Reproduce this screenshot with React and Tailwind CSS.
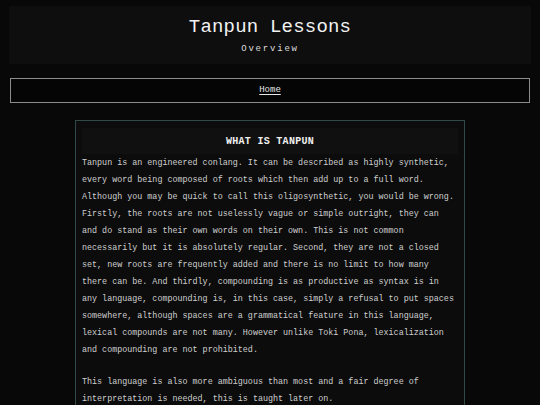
export default function App() {
  const mono = { fontFamily: '"Liberation Mono", "DejaVu Sans Mono", monospace' }
  return (
    <div className="min-h-screen bg-[#080808] px-[9px] pt-[6px] text-[#d4d4d4]" style={mono}>
      <header className="flex h-[58px] flex-col items-center bg-[#0e0e0e] pt-[10px]">
        <h1 className="text-[19px] leading-[22px] font-normal tracking-[0.2px] text-[#f2f2f2]">Tanpun Lessons</h1>
        <p className="mt-[5px] text-[9px] leading-[12px] tracking-[1.8px] text-[#dcdcdc]">Overview</p>
      </header>

      <nav className="mx-[1px] mt-[14px] flex h-[25px] items-center justify-center border border-[#8c8c8c] bg-[#050505]">
        <a className="text-[9px] text-[#e6e6e6] underline underline-offset-2">Home</a>
      </nav>

      <main className="mx-auto mt-[17px] w-[390px] border border-[#2f4a47] bg-[#0c0c0c] px-[6px] pt-[7px]">
        <div className="flex h-[26px] items-center justify-center bg-[#101010]">
          <h2 className="text-[10px] font-bold tracking-[0.3px] text-[#f0f0f0]">WHAT IS TANPUN</h2>
        </div>
        <div className="pt-[1px] text-[8.4px] leading-[17px] text-[#cfcfcf]">
          <p>
            Tanpun is an engineered conlang. It can be described as highly synthetic, every word being composed of roots
            which then add up to a full word. Although you may be quick to call this oligosynthetic, you would be wrong.
            Firstly, the roots are not uselessly vague or simple outright, they can and do stand as their own words on their
            own. This is not common necessarily but it is absolutely regular. Second, they are not a closed set, new roots
            are frequently added and there is no limit to how many there can be. And thirdly, compounding is as productive
            as syntax is in any language, compounding is, in this case, simply a refusal to put spaces somewhere, although
            spaces are a grammatical feature in this language, lexical compounds are not many. However unlike Toki Pona,
            lexicalization and compounding are not prohibited.
          </p>
          <p className="mt-[15px]">
            This language is also more ambiguous than most and a fair degree of interpretation is needed, this is taught
            later on.
          </p>
        </div>
      </main>
    </div>
  )
}
